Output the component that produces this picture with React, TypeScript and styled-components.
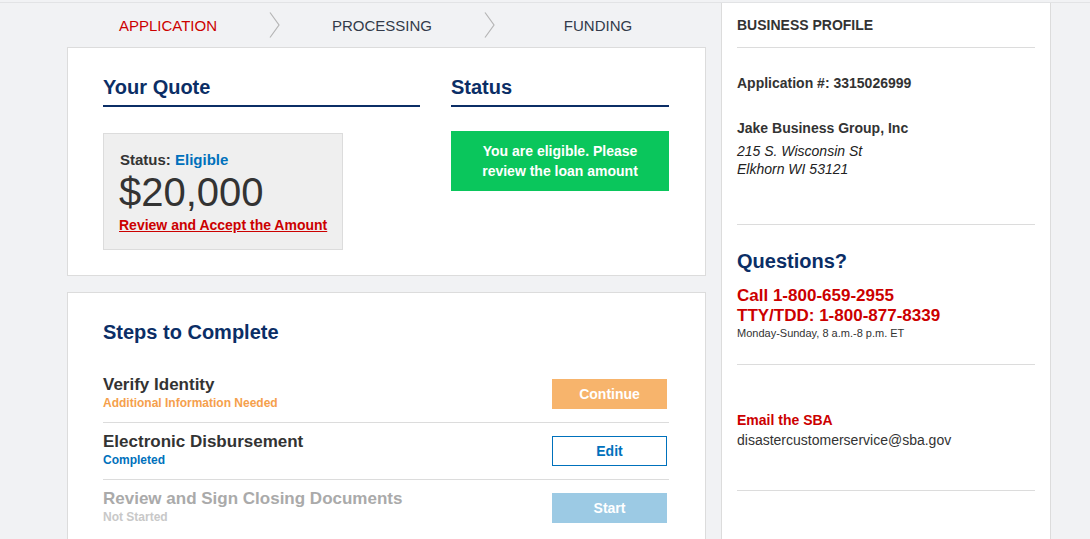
import * as React from 'react';
import styled, { createGlobalStyle } from 'styled-components';

const GlobalStyle = createGlobalStyle`
  html, body {
    margin: 0;
    padding: 0;
    background: #f1f2f4;
    font-family: "Liberation Sans", Arial, sans-serif;
    color: #333;
  }
  * { box-sizing: border-box; }
`;

const navy = '#0b2e66';
const red = '#cc0000';
const blue = '#0071bc';

const Page = styled.div`
  margin-top: 2px;
  border-top: 1px solid #e2e3e5;
  display: grid;
  grid-template-columns: 639px 330px;
  column-gap: 15px;
  padding-left: 67px;
  min-height: 537px;
`;

const Main = styled.main`
  display: flex;
  flex-direction: column;
`;

const Stepper = styled.nav`
  height: 44px;
  display: grid;
  grid-template-columns: 108px 106px 108px 108px 108px;
  align-items: center;
  justify-items: center;
  padding-left: 47px;
`;

const Step = styled.span<{ active?: boolean }>`
  white-space: nowrap;
  font-size: 15px;
  color: ${({ active }) => (active ? red : '#323a4a')};
`;

const Chevron = () => (
  <svg width="12" height="26" viewBox="0 0 12 26">
    <polyline points="1,0.5 10,13 1,25.5" fill="none" stroke="#b5b5b5" strokeWidth="1.2" />
  </svg>
);

const Card = styled.section`
  background: #fff;
  border: 1px solid #dcdcdc;
  padding: 27px 36px 25px 35px;
  & + & {
    margin-top: 16px;
  }
`;

const QuoteGrid = styled.div`
  display: grid;
  grid-template-columns: 317px 218px;
  column-gap: 31px;
`;

const SectionTitle = styled.h2<{ underline?: boolean }>`
  margin: 0;
  font-size: 20px;
  line-height: 24px;
  font-weight: bold;
  color: ${navy};
  ${({ underline }) =>
    underline &&
    `
    padding-bottom: 6px;
    border-bottom: 2px solid ${navy};
  `}
`;

const QuoteBox = styled.div`
  margin-top: 26px;
  width: 240px;
  background: #efefef;
  border: 1px solid #dcdcdc;
  padding: 17px 10px 15px 15px;
`;

const StatusLine = styled.div`
  font-size: 15px;
  font-weight: bold;
  line-height: 18px;
  padding-left: 1px;
  & > span {
    color: ${blue};
  }
`;

const Amount = styled.div`
  font-size: 40px;
  line-height: 44px;
  color: #333;
  margin-top: 1px;
`;

const ReviewLink = styled.a`
  display: block;
  margin-top: 2px;
  white-space: nowrap;
  font-size: 14px;
  line-height: 18px;
  font-weight: bold;
  color: ${red};
  text-decoration: underline;
`;

const EligibleBox = styled.div`
  margin-top: 24px;
  height: 60px;
  background: #0ac65c;
  color: #fff;
  font-size: 14px;
  font-weight: bold;
  line-height: 20px;
  display: flex;
  align-items: center;
  justify-content: center;
  text-align: center;
  padding: 0 20px;
`;

const StepList = styled.div`
  margin-top: 22px;
`;

const StepRow = styled.div`
  display: flex;
  align-items: center;
  justify-content: space-between;
  padding: 13px 2px 13px 0;
  & + & {
    border-top: 1px solid #dcdcdc;
  }
`;

const StepText = styled.div<{ muted?: boolean }>`
  height: 30px;
  display: flex;
  flex-direction: column;
  justify-content: center;
  color: ${({ muted }) => (muted ? '#aaa' : '#333')};
`;

const StepTitle = styled.div`
  font-size: 17px;
  line-height: 19px;
  font-weight: bold;
  white-space: nowrap;
`;

const StepSub = styled.div<{ tone: string }>`
  font-size: 12px;
  line-height: 19px;
  font-weight: bold;
  color: ${({ tone }) => tone};
`;

const StepButton = styled.button<{ variant: 'orange' | 'outline' | 'disabled' }>`
  width: 115px;
  height: 30px;
  flex-shrink: 0;
  font-family: inherit;
  font-size: 14px;
  font-weight: bold;
  border: 1px solid transparent;
  ${({ variant }) =>
    variant === 'orange'
      ? 'background: #f7b46c; color: #fff; border-color: #f7b46c;'
      : variant === 'outline'
      ? `background: #fff; color: ${blue}; border-color: ${blue};`
      : 'background: #9ccae4; color: #fff; border-color: #9ccae4;'}
`;

const Sidebar = styled.aside`
  background: #fff;
  border-left: 1px solid #dcdcdc;
  border-right: 1px solid #dcdcdc;
  padding: 0 15px;
`;

const SideSection = styled.div<{ pad: string }>`
  padding: ${({ pad }) => pad};
  border-bottom: 1px solid #dcdcdc;
`;

const SideHeader = styled.div`
  font-size: 14px;
  line-height: 16px;
  font-weight: bold;
  color: #333;
`;

const BoldLine = styled.div<{ gap?: number }>`
  font-size: 14px;
  line-height: 18px;
  font-weight: bold;
  color: #333;
  margin-top: ${({ gap }) => gap || 0}px;
`;

const Address = styled.div`
  font-size: 14px;
  line-height: 18px;
  font-style: italic;
  color: #222;
  margin-top: 5px;
`;

const Phone = styled.div<{ gap?: number }>`
  font-size: 17px;
  line-height: 20px;
  font-weight: bold;
  color: ${red};
  margin-top: ${({ gap }) => gap || 0}px;
`;

const Hours = styled.div`
  font-size: 11px;
  line-height: 14px;
  color: #333;
`;

const EmailLabel = styled.div`
  font-size: 14px;
  line-height: 18px;
  font-weight: bold;
  color: ${red};
`;

const Email = styled.div`
  font-size: 14px;
  line-height: 18px;
  color: #333;
  margin-top: 2px;
`;

const steps = [
  { title: 'Verify Identity', sub: 'Additional Information Needed', tone: '#f5a04c', btn: 'Continue', variant: 'orange' as const },
  { title: 'Electronic Disbursement', sub: 'Completed', tone: blue, btn: 'Edit', variant: 'outline' as const },
  { title: 'Review and Sign Closing Documents', sub: 'Not Started', tone: '#c8c8c8', btn: 'Start', variant: 'disabled' as const },
];

export default function App() {
  return (
    <>
      <GlobalStyle />
      <Page>
        <Main>
          <Stepper>
            <Step active>APPLICATION</Step>
            <Chevron />
            <Step>PROCESSING</Step>
            <Chevron />
            <Step>FUNDING</Step>
          </Stepper>

          <Card>
            <QuoteGrid>
              <div>
                <SectionTitle underline>Your Quote</SectionTitle>
                <QuoteBox>
                  <StatusLine>
                    Status: <span>Eligible</span>
                  </StatusLine>
                  <Amount>$20,000</Amount>
                  <ReviewLink href="#">Review and Accept the Amount</ReviewLink>
                </QuoteBox>
              </div>
              <div>
                <SectionTitle underline>Status</SectionTitle>
                <EligibleBox>You are eligible. Please review the loan amount</EligibleBox>
              </div>
            </QuoteGrid>
          </Card>

          <Card>
            <SectionTitle>Steps to Complete</SectionTitle>
            <StepList>
              {steps.map((s) => (
                <StepRow key={s.title}>
                  <StepText muted={s.variant === 'disabled'}>
                    <StepTitle>{s.title}</StepTitle>
                    <StepSub tone={s.tone}>{s.sub}</StepSub>
                  </StepText>
                  <StepButton variant={s.variant}>{s.btn}</StepButton>
                </StepRow>
              ))}
            </StepList>
          </Card>
        </Main>

        <Sidebar>
          <SideSection pad="14px 0 14px">
            <SideHeader>BUSINESS PROFILE</SideHeader>
          </SideSection>
          <SideSection pad="26px 0 46px">
            <BoldLine>Application #: 3315026999</BoldLine>
            <BoldLine gap={27}>Jake Business Group, Inc</BoldLine>
            <Address>
              215 S. Wisconsin St
              <br />
              Elkhorn WI 53121
            </Address>
          </SideSection>
          <SideSection pad="24px 0 24px">
            <SectionTitle>Questions?</SectionTitle>
            <Phone gap={13}>Call 1-800-659-2955</Phone>
            <Phone>TTY/TDD: 1-800-877-8339</Phone>
            <Hours>Monday-Sunday, 8 a.m.-8 p.m. ET</Hours>
          </SideSection>
          <SideSection pad="46px 0 41px">
            <EmailLabel>Email the SBA</EmailLabel>
            <Email>disastercustomerservice@sba.gov</Email>
          </SideSection>
        </Sidebar>
      </Page>
    </>
  );
}
